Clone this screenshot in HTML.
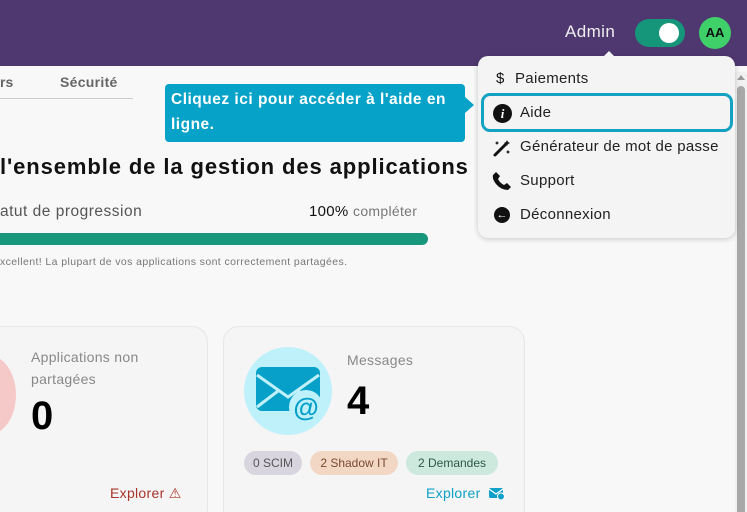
<!DOCTYPE html>
<html><head><meta charset="utf-8"><style>
*{box-sizing:border-box;margin:0;padding:0}
html,body{width:747px;height:512px;overflow:hidden}
body{background:#f8f8f8;font-family:"Liberation Sans",sans-serif;position:relative;color:#111}
.hdr{position:absolute;left:0;top:0;width:747px;height:66px;background:#4f3870}
.abs{position:absolute;white-space:nowrap}
.card{position:absolute;top:326px;height:200px;border:1px solid #e6e6e6;border-radius:16px;background:#f5f5f5}
.pill{position:absolute;top:451px;height:24px;border-radius:12px;font-size:12px;line-height:24px;text-align:center}
.menu{position:absolute;left:478px;top:56px;width:257px;height:182px;background:#f4f4f4;border-radius:10px;box-shadow:0 1px 6px rgba(0,0,0,.2)}
.mi{position:absolute;left:42px;font-size:15px;color:#222;letter-spacing:.3px;white-space:nowrap}
</style></head><body>
<div class="hdr"></div>
<div class="abs" style="left:565px;top:22px;color:#eee;font-size:17px;letter-spacing:.4px">Admin</div>
<div class="abs" style="left:635px;top:19px;width:50px;height:28px;border-radius:14px;background:#15957a"></div>
<div class="abs" style="left:659px;top:23px;width:20px;height:20px;border-radius:50%;background:#fff"></div>
<div class="abs" style="left:699px;top:17px;width:32px;height:32px;border-radius:50%;background:#3fd06a;font-weight:bold;font-size:13px;line-height:32px;text-align:center;color:#111">AA</div>

<div class="abs" style="left:0;top:74px;font-weight:bold;color:#666;font-size:14px">rs</div>
<div class="abs" style="left:60px;top:74px;font-weight:bold;color:#666;font-size:14px;letter-spacing:.3px">Sécurité</div>
<div class="abs" style="left:0;top:98px;width:133px;height:1px;background:#ccc"></div>

<div class="abs" style="left:165px;top:84px;width:300px;height:58px;background:#07a2c8;border-radius:4px;color:#fff;font-weight:bold;font-size:15.5px;line-height:25px;padding:3px 6px;white-space:normal;letter-spacing:.5px">Cliquez ici pour accéder à l'aide en ligne.</div>
<div class="abs" style="left:465px;top:97px;width:0;height:0;border-top:8px solid transparent;border-bottom:8px solid transparent;border-left:9px solid #07a2c8"></div>

<div class="abs" style="left:0;top:154px;font-size:22px;font-weight:bold;color:#111;letter-spacing:.9px">l'ensemble de la gestion des applications</div>
<div class="abs" style="left:0;top:203px;font-size:15.5px;color:#555;letter-spacing:.5px">atut de progression</div>
<div class="abs" style="left:309px;top:203px;font-size:15px;color:#111;letter-spacing:.3px">100% <span style="color:#777;font-size:14px">compléter</span></div>
<div class="abs" style="left:-10px;top:233px;width:438px;height:12px;border-radius:6px;background:#18977c"></div>
<div class="abs" style="left:0;top:256px;font-size:10.5px;color:#777;letter-spacing:.4px">xcellent! La plupart de vos applications sont correctement partagées.</div>

<div class="card" style="left:-20px;width:228px"></div>
<div class="abs" style="left:-40px;top:355px;width:56px;height:80px;border-radius:50%;background:#f6c9c9"></div>
<div class="abs" style="left:31px;top:346px;font-size:14px;color:#888;line-height:22px;letter-spacing:.3px">Applications non<br>partagées</div>
<div class="abs" style="left:31px;top:394px;font-size:40px;font-weight:bold;color:#000">0</div>
<div class="abs" style="left:110px;top:485px;font-size:14px;color:#a8352a;letter-spacing:.3px">Explorer ⚠</div>

<div class="card" style="left:223px;width:302px"></div>
<div class="abs" style="left:244px;top:347px;width:88px;height:88px;border-radius:50%;background:#bff1fb"></div>
<svg class="abs" style="left:252px;top:365px" width="72" height="60" viewBox="0 0 72 60"><rect x="4" y="2" width="64" height="44" rx="6" fill="#06a0c9"/><path d="M5 10 L36 32 L67 10" stroke="#bff1fb" stroke-width="3" fill="none"/><path d="M5 42 L26 26 M67 42 L46 26" stroke="#bff1fb" stroke-width="3"/><circle cx="54" cy="42" r="17" fill="#bff1fb"/><text x="54" y="51" text-anchor="middle" font-size="26" font-weight="bold" fill="#06a0c9" font-family="Liberation Sans">@</text></svg>
<div class="abs" style="left:347px;top:352px;font-size:14px;color:#888;letter-spacing:.3px">Messages</div>
<div class="abs" style="left:347px;top:379px;font-size:40px;font-weight:bold;color:#000">4</div>
<div class="pill" style="left:244px;width:58px;background:#d9d5df;color:#555">0 SCIM</div>
<div class="pill" style="left:310px;width:88px;background:#f3d7c5;color:#7a4a30">2 Shadow IT</div>
<div class="pill" style="left:406px;width:92px;background:#cde9de;color:#2d5a48">2 Demandes</div>
<div class="abs" style="left:426px;top:485px;font-size:14px;color:#10a0c8;letter-spacing:.3px">Explorer</div>
<svg class="abs" style="left:489px;top:487px" width="16" height="13" viewBox="0 0 16 13"><rect x="0" y="1" width="14" height="10" rx="1.5" fill="#10a0c8"/><path d="M0 2 L7 7 L14 2" stroke="#fff" stroke-width="1.2" fill="none"/><circle cx="12" cy="9.5" r="3.5" fill="#10a0c8" stroke="#fff"/></svg>

<div class="abs" style="left:735px;top:72px;width:12px;height:440px;background:#f1f1f1"></div>
<div class="abs" style="left:737px;top:86px;width:8px;height:430px;background:#a8a8a8;border-radius:4px"></div>
<div class="abs" style="left:737px;top:75px;width:0;height:0;border-left:4px solid transparent;border-right:4px solid transparent;border-bottom:5px solid #999"></div>

<div class="menu">
<div class="abs" style="left:126px;top:-5px;width:0;height:0;border-left:5px solid transparent;border-right:5px solid transparent;border-bottom:5px solid #f4f4f4"></div>
<div class="abs" style="left:3px;top:37px;width:252px;height:39px;border:3px solid #13a2c2;border-radius:9px;background:#f4f4f4"></div>
<div class="abs" style="left:18px;top:14px;font-size:15px">$</div><div class="mi" style="left:37px;top:14px">Paiements</div>
<div class="abs" style="left:15px;top:48px;width:19px;height:19px;border-radius:50%;background:#111;color:#fff;font-size:13px;font-weight:bold;font-style:italic;text-align:center;line-height:19px;font-family:'Liberation Serif',serif">i</div><div class="mi" style="top:48px">Aide</div>
<svg class="abs" style="left:14px;top:82px" width="20" height="20" viewBox="0 0 20 20"><path d="M3 17 L13 7" stroke="#111" stroke-width="3" stroke-linecap="round"/><path d="M15 2 l1 2 2 1 -2 1 -1 2 -1 -2 -2 -1 2 -1z M5 3 l.7 1.3 1.3.7 -1.3.7 -.7 1.3 -.7-1.3 -1.3-.7 1.3-.7z M16 12 l.7 1.3 1.3.7 -1.3.7 -.7 1.3 -.7-1.3 -1.3-.7 1.3-.7z" fill="#111"/></svg><div class="mi" style="top:82px">Générateur de mot de passe</div>
<svg class="abs" style="left:14px;top:115px" width="20" height="20" viewBox="0 0 20 20"><path d="M4 1 L8 5 L6 8 Q8 12 12 14 L15 12 L19 16 L16 19 Q9 19 4 13 Q0 8 1 4 Z" fill="#111"/></svg><div class="mi" style="top:116px">Support</div>
<div class="abs" style="left:16px;top:151px;width:16px;height:16px;border-radius:50%;background:#111;color:#fff;font-size:11px;font-weight:bold;text-align:center;line-height:16px">←</div><div class="mi" style="top:150px">Déconnexion</div>
</div>
</body></html>
